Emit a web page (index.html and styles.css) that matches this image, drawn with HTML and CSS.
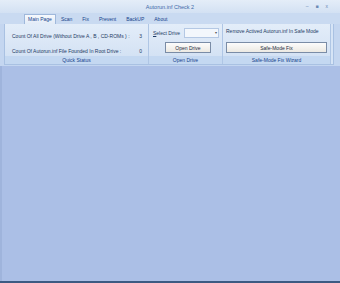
FILE: index.html
```html
<html>
	<head>
		<link rel="stylesheet" href="styles.css">
	</head>
	<body>
		<div class="window">
			<div class="titlebar">
				<div class="title">Autorun.inf Check 2</div>
				<div class="controls"><span>&#8211;</span><span class="max">&#9632;</span><span>x</span></div>
			</div>
			<div class="tabs">
				<div class="tab active">Main Page</div>
				<div class="tab">Scan</div>
				<div class="tab">Fix</div>
				<div class="tab">Prevent</div>
				<div class="tab">BackUP</div>
				<div class="tab">About</div>
			</div>
			<div class="ribbon">
				<div class="group status">
					<div class="body">
						<div class="row"><span>Count Of All Drive (Without Drive A , B , CD-ROMs ) :</span><span>3</span></div>
						<div class="row"><span>Count Of Autorun.inf File Founded In Root Drive :</span><span>0</span></div>
					</div>
					<div class="label">Quick Status</div>
				</div>
				<div class="group drive">
					<div class="body">
						<div class="select"><span><u>S</u>elect Drive</span><div class="combo">&#9662;</div></div>
						<div class="btn open">Open Drive</div>
					</div>
					<div class="label">Open Drive</div>
				</div>
				<div class="group safe">
					<div class="body">
						<div class="hint">Remove Actived Autorun.inf In Safe Mode</div>
						<div class="btn fix">Safe-Mode Fix</div>
					</div>
					<div class="label">Safe-Mode Fix Wizard</div>
				</div>
			</div>
			<div class="client"></div>
		</div>
	</body>
</html>
```
FILE: styles.css
```css
body {
	margin: 0;
	font-family: "Liberation Sans", Arial, sans-serif;
	font-size: 5px;
	color: #1d3a63;
}

.window {
	width: 340px;
	height: 283px;
	display: flex;
	flex-direction: column;
	background: #c4d6f0;
	border-bottom: 2px solid #3c5a82;
	box-sizing: border-box;
}

.titlebar {
	height: 13px;
	display: flex;
	align-items: center;
	justify-content: center;
	position: relative;
	background: linear-gradient(#e4edf8, #d3e1f3);
	color: #3e6aa8;
	font-size: 5.5px;
}

.controls {
	position: absolute;
	right: 12px;
	top: 3px;
	display: flex;
	gap: 7px;
	color: #6b89b4;
	font-size: 5px;
}

.tabs {
	height: 11px;
	display: flex;
	align-items: flex-end;
	padding-left: 24px;
	background: #c9daf1;
}

.tab {
	height: 10px;
	line-height: 10px;
	padding: 0 5px;
	color: #15428b;
}

.tab.active {
	background: linear-gradient(#f6f9fd, #e2ebf7);
	border: 1px solid #9fb8db;
	border-bottom: none;
	height: 10px;
	box-sizing: border-box;
	line-height: 9px;
	padding: 0 3px;
}

.ribbon {
	height: 41px;
	margin: 0 6px 0 4px;
	display: flex;
	background: #d6e4f6;
	border: 1px solid #a9c1e2;
	border-top: none;
	box-sizing: border-box;
}

.group {
	display: flex;
	flex-direction: column;
	border-right: 1px solid #afc6e5;
	box-sizing: border-box;
}

.group .body {
	flex: 1;
	background: linear-gradient(#e3edf9, #d4e2f4);
}

.group .label {
	height: 8px;
	line-height: 8px;
	text-align: center;
	background: #c4d8f1;
	color: #15428b;
}

.status {
	width: 144px;
}

.status .body {
	padding: 9px 6px 0 7px;
	display: flex;
	flex-direction: column;
	gap: 9px;
}

.row {
	display: flex;
	justify-content: space-between;
	height: 6px;
	line-height: 6px;
}

.drive {
	width: 74px;
}

.drive .body {
	padding: 3px 3px 0 4px;
}

.select {
	display: flex;
	align-items: center;
	gap: 4px;
	height: 11px;
}

.combo {
	width: 35px;
	height: 10px;
	background: #f3f7fc;
	border: 1px solid #b4c8e4;
	box-sizing: border-box;
	text-align: right;
	font-size: 4px;
	line-height: 8px;
	color: #555;
	padding-right: 1px;
}

.btn {
	height: 11px;
	line-height: 10px;
	text-align: center;
	background: linear-gradient(#fcfcfc, #ece9e2);
	border: 1px solid #7a8ca6;
	box-sizing: border-box;
	color: #1e2a3c;
}

.open {
	margin: 4px 8px 0 12px;
}

.safe {
	width: 108px;
}

.safe .body {
	padding: 4px 3px 0 3px;
}

.hint {
	height: 11px;
}

.fix {
	margin-top: 3px;
}

.client {
	flex: 1;
	margin-top: 1px;
	background: #abbfe6;
	border-left: 2px solid #9fb4dc;
}
```
